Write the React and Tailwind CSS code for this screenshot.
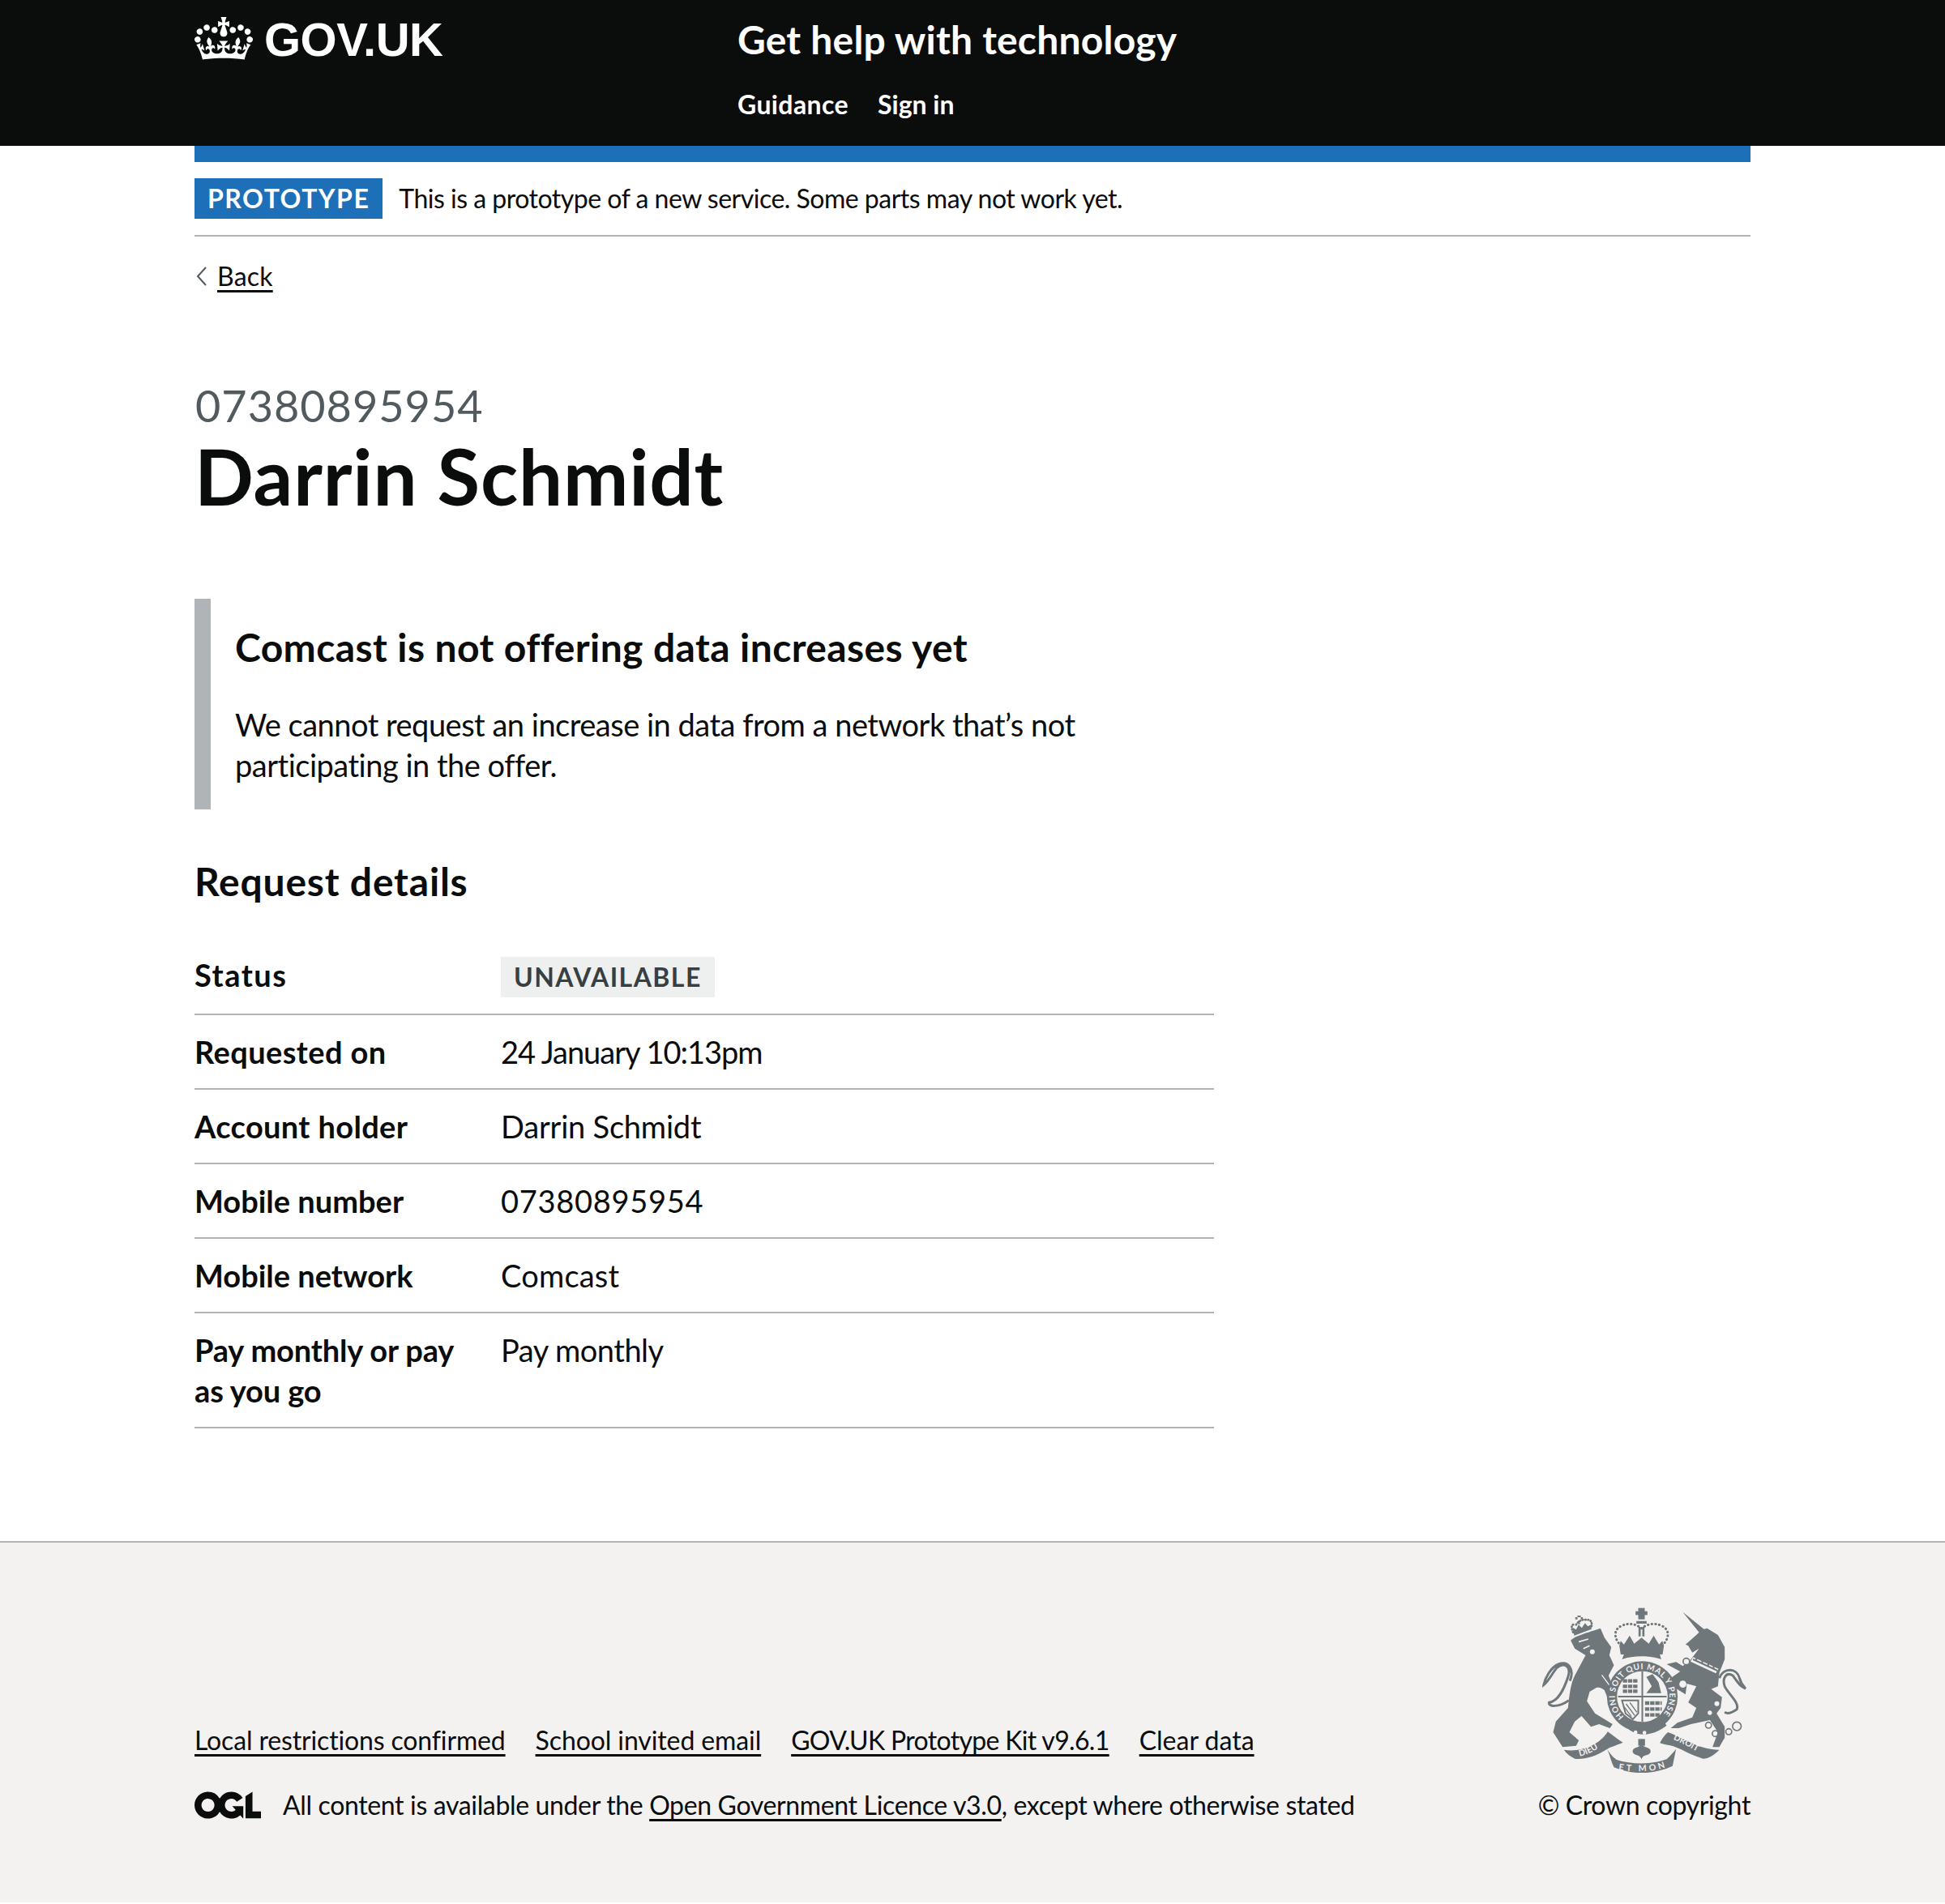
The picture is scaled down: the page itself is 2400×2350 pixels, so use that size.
import React from "react";

const rows = [
  ["Requested on", "tracking-[0.4px]", "24 January 10:13pm", "tracking-[-1px]"],
  ["Account holder", "tracking-[0.35px]", "Darrin Schmidt", "tracking-[-0.2px]"],
  ["Mobile number", "", "07380895954", "tracking-[0.7px]"],
  ["Mobile network", "", "Comcast", "tracking-[0.2px]"],
];

const CrownLogo = () => (
  <svg viewBox="0 0 132 97" className="w-[72px] h-[53px] fill-white">
    <path
      fillRule="evenodd"
      d="M25 30.2c3.5 1.5 7.7-.2 9.1-3.7 1.5-3.6-.2-7.8-3.9-9.2-3.6-1.4-7.6.3-9.1 3.9-1.4 3.5.3 7.5 3.9 9zM9 39.5c3.6 1.5 7.8-.2 9.2-3.7 1.5-3.6-.2-7.8-3.9-9.1-3.6-1.5-7.6.2-9.1 3.8-1.4 3.5.3 7.5 3.8 9zM4.4 57.2c3.5 1.5 7.7-.2 9.1-3.8 1.5-3.6-.2-7.7-3.9-9.1-3.5-1.5-7.6.3-9.1 3.8-1.4 3.5.3 7.6 3.9 9.1zm38.3-21.4c3.5 1.5 7.7-.2 9.1-3.8 1.5-3.6-.2-7.7-3.9-9.1-3.6-1.5-7.6.3-9.1 3.8-1.3 3.6.4 7.7 3.9 9.1zm64.4-5.6c-3.6 1.5-7.8-.2-9.1-3.7-1.5-3.6.2-7.8 3.8-9.2 3.6-1.4 7.7.3 9.2 3.9 1.3 3.5-.4 7.5-3.9 9zm15.9 9.3c-3.6 1.5-7.7-.2-9.1-3.7-1.5-3.6.2-7.8 3.7-9.1 3.6-1.5 7.7.2 9.2 3.8 1.5 3.5-.3 7.5-3.8 9zm4.7 17.7c-3.6 1.5-7.8-.2-9.2-3.8-1.5-3.6.2-7.7 3.9-9.1 3.6-1.5 7.7.3 9.2 3.8 1.3 3.5-.4 7.6-3.9 9.1zM89.3 35.8c-3.6 1.5-7.8-.2-9.2-3.8-1.4-3.6.2-7.7 3.9-9.1 3.6-1.5 7.7.3 9.2 3.8 1.4 3.6-.3 7.7-3.9 9.1zM69.7 17.7l8.9 4.7V9.3l-8.9 2.8c-.2-.3-.5-.6-.9-.9L72.4 0H59.6l3.5 11.2c-.3.3-.6.5-.9.9l-8.8-2.8v13.1l8.8-4.7c.3.3.6.7.9.9l-5 15.4v.1c-.2.8-.4 1.6-.4 2.4 0 4.1 3.1 7.5 7 8.1h.2c.3 0 .7.1 1 .1.4 0 .7 0 1-.1h.2c4-.6 7.1-4.1 7.1-8.1 0-.8-.1-1.7-.4-2.4V34l-5.1-15.4c.4-.2.7-.6 1-.9zM66 92.8c16.9 0 32.8 1.1 47.1 3.2 4-16.9 8.9-26.7 14-33.5l-9.6-3.4c1 4.9 1.1 7.2 0 10.2-1.5-1.4-3-4.3-4.2-8.7L108.6 76c2.8-2 5-3.2 7.5-3.3-4.4 9.4-10 11.9-13.6 11.2-4.3-.8-6.3-4.6-5.6-7.9 1-4.7 5.7-5.9 8-.5 4.3-8.7-3-11.4-7.6-8.8 7.1-7.2 7.9-13.5 2.1-21.1-8 6.1-8.1 12.3-4.5 20.8-4.7-5.4-12.1-2.5-9.5 6.2 3.4-5.2 7.9-2 7.2 3.1-.6 4.3-6.4 7.8-13.5 7.2-10.3-.9-10.9-8-11.2-13.8 2.5-.5 7.1 1.8 11 7.3L80.2 60c-4.1 4.4-8 5.3-12.3 5.4 1.4-4.4 8-11.6 8-11.6H55.5s6.4 7.2 7.9 11.6c-4.2-.1-8-1-12.3-5.4l1.4 16.4c3.9-5.5 8.5-7.7 10.9-7.3-.3 5.8-.9 12.8-11.1 13.8-7.2.6-12.9-2.9-13.5-7.2-.7-5 3.8-8.3 7.1-3.1 2.7-8.7-4.6-11.6-9.4-6.2 3.7-8.5 3.6-14.7-4.6-20.8-5.8 7.6-5 13.9 2.2 21.1-4.7-2.6-11.9.1-7.7 8.8 2.3-5.5 7.1-4.2 8.1.5.7 3.3-1.3 7.1-5.7 7.9-3.5.7-9-1.8-13.5-11.2 2.5.1 4.7 1.3 7.5 3.3l-4.7-15.4c-1.2 4.4-2.7 7.2-4.3 8.7-1.1-3-.9-5.3 0-10.2l-9.5 3.4c5 6.9 9.9 16.7 14 33.5 14.8-2.1 30.8-3.2 47.7-3.2z"
    />
  </svg>
);

const OglLogo = () => (
  <svg viewBox="0 0 483.2 195.7" className="w-[82px] h-[34px] fill-[#0b0c0c] shrink-0">
    <path d="M421.5 142.8V.1l-50.7 32.3v161.1h112.4v-50.7zm-122.3-9.6A47.12 47.12 0 0 1 221 97.8c0-26 21.1-47.1 47.1-47.1 16.7 0 31.4 8.7 39.7 21.8l42.7-27.2A97.63 97.63 0 0 0 268.1 0c-36.5 0-68.3 20.1-85.1 49.7A98 98 0 0 0 97.8 0C43.9 0 0 43.9 0 97.8s43.9 97.8 97.8 97.8c36.5 0 68.3-20.1 85.1-49.7a97.76 97.76 0 0 0 149.6 25.4l19.4 22.2h3v-87.8h-80l24.3 27.5zM97.8 145c-26 0-47.1-21.1-47.1-47.1s21.1-47.1 47.1-47.1 47.2 21 47.2 47S123.8 145 97.8 145" />
  </svg>
);

// royal arms, drawn by hand in the coordinates of the zoomed reference
const RoyalArms = () => (
  <svg viewBox="70 45 755 615" className="w-[252px] h-[205px] fill-[#6f777b]">
    {/* lion */}
    <path d="M175 170C190 155 215 148 285 125L300 160L325 195L318 225C325 240 330 250 335 262L315 300L335 350L345 395L320 405L300 355C290 345 280 342 270 345L245 360L235 395L265 440L330 480L320 495L280 480L250 490L215 450L190 470L170 510L205 540L195 560L145 565L110 510L120 470L165 420C170 370 175 330 190 300L230 225L190 200Z" />
    <path d="M168 392C130 420 90 415 95 400C130 395 150 350 165 305C178 265 150 250 125 270C110 285 95 320 75 335C80 310 100 270 130 258C165 245 190 275 172 320" className="fill-none stroke-[#6f777b] stroke-[9]" />
    <path d="M205 175L240 165M222 200L245 190" className="stroke-[#f3f2f1] stroke-[5]" />
    <path d="M290 298L345 372" className="stroke-[#f3f2f1] stroke-[4]" />
    <circle cx="255" cy="212" r="9" className="fill-[#f3f2f1]" />
    {/* lion crown */}
    <path d="M184 140C175 120 178 108 190 112M252 118C256 100 245 90 235 95M195 112C205 95 225 90 235 95" className="fill-none stroke-[#6f777b] stroke-[8]" strokeDasharray="2 8" strokeLinecap="round" />
    <path d="M182 122L195 130L204 112L216 124L228 106L238 118L250 112L252 128L188 152Z" />
    <path d="M200 92H212V78H200ZM192 84H220V92H192ZM203 96H209V110H203Z" />
    {/* unicorn */}
    <path d="M590 65L668 128L680 125L720 150L745 195L745 240L725 290L720 340L695 350L735 380L730 420L715 440L745 490L745 530L725 565L700 565L720 510L690 465L620 480L575 495L545 495L570 475L625 455L640 420L610 400L625 370L640 340L605 330L600 370L560 345L545 310L580 285L530 258L565 250L590 265L620 240L650 200L625 215L610 190L600 185L640 150L650 140Z" />
    <path d="M725 310C740 270 790 270 800 310C805 330 815 340 822 348C800 340 790 320 775 300C750 285 735 310 745 340C760 370 800 400 790 425C775 435 755 445 745 435" className="fill-none stroke-[#6f777b] stroke-[9]" />
    <path d="M628 232L722 275L712 292L618 248Z" className="fill-[#f3f2f1]" />
    <path d="M628 240L718 282M640 232V246M662 242V258M684 252V268M704 262V278" className="fill-none stroke-[#6f777b] stroke-[6]" />
    <circle cx="603" cy="248" r="12" className="fill-[#f3f2f1] stroke-[#6f777b] stroke-[5]" />
    <circle cx="590" cy="332" r="13" className="fill-[#f3f2f1]" />
    <circle cx="685" cy="484" r="11" className="fill-none stroke-[#6f777b] stroke-[5]" />
    <circle cx="710" cy="515" r="11" className="fill-none stroke-[#6f777b] stroke-[5]" />
    <circle cx="760" cy="508" r="11" className="fill-none stroke-[#6f777b] stroke-[5]" />
    <circle cx="790" cy="488" r="16" className="fill-none stroke-[#6f777b] stroke-[5]" />
    <circle cx="725" cy="356" r="11" className="fill-[#f3f2f1]" />
    <circle cx="716" cy="404" r="9" className="fill-[#f3f2f1]" />
    <circle cx="690" cy="438" r="8" className="fill-[#f3f2f1]" />
    {/* main crown */}
    <path d="M425 50H449V92H425Z" />
    <path d="M415 62H459V76H415Z" />
    <path d="M418 98H456V108H418ZM426 120H434V155H426ZM440 120H448V155H440Z" />
    <path d="M362 190C335 165 330 130 365 115C395 102 420 112 437 125C455 112 480 102 510 115C545 130 540 165 512 190" className="fill-none stroke-[#6f777b] stroke-[9]" strokeDasharray="1 13" strokeLinecap="round" />
    <path d="M355 190L360 172L372 185L393 152L410 182L437 160L464 182L482 152L502 185L514 172L520 190L515 222H360Z" />
    <path d="M372 222C410 212 465 212 505 222L510 240C470 225 405 225 365 240Z" />
    {/* garter and shield */}
    <circle cx="440" cy="378" r="131" />
    <circle cx="440" cy="378" r="94" className="fill-[#f3f2f1]" />
    <path d="M350 378H530M440 284V472" className="fill-none stroke-[#6f777b] stroke-[6]" />
    <path d="M368 320H425M368 340H425M368 358H425M450 402H512M450 424H512M450 446H505" className="fill-none stroke-[#6f777b] stroke-[13]" strokeDasharray="16 3" />
    <path d="M455 305L478 295L500 325L510 365H455L475 340Z" />
    <path d="M365 392H425V440L405 462L378 440Z" className="fill-[#f3f2f1] stroke-[#6f777b] stroke-[6]" />
    <path d="M380 405L412 448M394 400L420 436M372 415L400 452" className="fill-none stroke-[#6f777b] stroke-[4]" />
    <path d="M370 480C410 530 470 530 530 485L520 470C480 505 420 510 385 465Z" />
    <circle cx="415" cy="510" r="7" className="fill-[#f3f2f1]" />
    <circle cx="448" cy="512" r="7" className="fill-[#f3f2f1]" />
    <defs>
      <path id="garterRing" d="M372 452A101 101 0 1 1 508 452" />
      <path id="ribbonLeft" d="M200 600C240 595 280 570 315 540" />
      <path id="ribbonRight" d="M550 535C590 550 630 575 675 600" />
      <path id="ribbonMid" d="M350 648C400 658 480 658 525 640" />
    </defs>
    <text className="fill-[#f3f2f1] text-[30px] font-bold">
      <textPath href="#garterRing" textLength="470">HONI SOIT QUI MAL Y PENSE</textPath>
    </text>
    {/* ribbon */}
    <path d="M150 575C210 585 280 560 312 508C335 525 355 540 368 548C340 560 320 565 310 572C270 600 220 612 190 608C175 600 160 590 150 575Z" />
    <path d="M310 572C320 590 335 605 345 612C400 630 480 630 530 610C545 595 555 585 565 572L552 635C480 668 400 668 335 640C325 620 320 595 310 572Z" />
    <path d="M505 550C515 530 525 518 535 510C590 530 650 575 725 575C705 595 685 608 665 608C620 595 590 575 555 562C540 558 520 555 505 550Z" />
    <text className="fill-[#f3f2f1] text-[32px] font-bold">
      <textPath href="#ribbonLeft" startOffset="8">DIEU</textPath>
    </text>
    <text className="fill-[#f3f2f1] text-[32px] font-bold">
      <textPath href="#ribbonRight" startOffset="4">DROIT</textPath>
    </text>
    <text className="fill-[#f3f2f1] text-[32px] font-bold">
      <textPath href="#ribbonMid" textLength="175" startOffset="2">ET MON</textPath>
    </text>
    <path d="M425 535H450V560H425Z" />
    <path d="M437 555C425 570 400 565 405 585C415 600 430 590 437 610C445 590 460 600 470 585C475 565 450 570 437 555Z" />
  </svg>
);

export default function App() {
  return (
    <div className="w-[2400px] font-['Lato',sans-serif] text-[#0b0c0c] text-[38px] leading-[50px] bg-white [font-variant-ligatures:none]">
      <header className="bg-[#0b0c0c] h-[180px] text-white">
        <div className="w-[1920px] mx-auto flex">
          <div className="w-[670px] flex items-start gap-[14px] pt-[21px]">
            <CrownLogo />
            <span className="font-['Liberation_Sans',sans-serif] font-bold text-[58px] leading-[56px] tracking-[-0.5px]">GOV.UK</span>
          </div>
          <div className="pt-[19px]">
            <div className="text-[48px] leading-[60px] font-bold tracking-[0.2px]">Get help with technology</div>
            <nav className="flex gap-[36px] mt-[25px] text-[32px] leading-[50px] font-bold">
              <span className="tracking-[0.4px]">Guidance</span>
              <span>Sign in</span>
            </nav>
          </div>
        </div>
      </header>

      <main className="w-[1920px] mx-auto">
        <div className="h-[20px] bg-[#1d70b8]" />
        <div className="flex items-center gap-[20px] py-[20px] border-b-2 border-[#b1b4b6] text-[32px] h-[92px]">
          <span className="bg-[#1d70b8] text-white font-bold tracking-[1.5px] h-[50px] leading-[50px] px-[16px]">PROTOTYPE</span>
          <span className="tracking-[-0.5px]">This is a prototype of a new service. Some parts may not work yet.</span>
        </div>
        <div className="flex items-center gap-[12px] mt-[24px] text-[32px] leading-[50px]">
          <svg viewBox="0 0 14 24" className="w-[14px] h-[24px] ml-[2px]">
            <path d="M12 1L2 12L12 23" className="fill-none stroke-[#505a5f] stroke-2" />
          </svg>
          <a className="underline underline-offset-[5px] tracking-[0.2px]">Back</a>
        </div>

        <div className="text-[54px] leading-[60px] text-[#505a5f] mt-[105px] ml-[1px] tracking-[1px]">07380895954</div>
        <h1 className="text-[96px] leading-[100px] font-bold mt-[6px] tracking-[0.8px]">Darrin Schmidt</h1>

        <div className="w-[1258px] mt-[102px] border-l-[20px] border-[#b1b4b6] pl-[30px] pt-[30px] h-[260px]">
          <h2 className="text-[48px] leading-[60px] font-bold tracking-[0.4px]">Comcast is not offering data increases yet</h2>
          <p className="mt-[40px] w-[1060px] tracking-[-0.5px]">We cannot request an increase in data from a network that’s not participating in the offer.</p>
        </div>

        <h2 className="text-[48px] leading-[60px] font-bold mt-[59px] tracking-[0.8px]">Request details</h2>

        <dl className="w-[1258px] mt-[42px]">
          <div className="flex border-b-2 border-[#b1b4b6] h-[93px] items-start">
            <dt className="w-[378px] font-bold pt-[18px] tracking-[1.5px]">Status</dt>
            <dd className="pt-[21px]">
              <span className="block bg-[#eeefef] text-[#383f43] font-bold text-[32px] tracking-[1.45px] h-[50px] leading-[50px] px-[16px]">UNAVAILABLE</span>
            </dd>
          </div>
          {rows.map((row) => (
            <div key={row[0]} className="flex border-b-2 border-[#b1b4b6] py-[20px]">
              <dt className={`w-[378px] font-bold ${row[1]}`}>{row[0]}</dt>
              <dd className={row[3]}>{row[2]}</dd>
            </div>
          ))}
          <div className="flex border-b-2 border-[#b1b4b6] py-[20px]">
            <dt className="w-[378px] font-bold pr-[20px] tracking-[-0.15px]">Pay monthly or pay as you go</dt>
            <dd className="tracking-[-0.5px]">Pay monthly</dd>
          </div>
        </dl>
      </main>

      <footer className="mt-[139px] h-[446px] bg-[#f3f2f1] border-t-2 border-[#b1b4b6] text-[32px]">
        <div className="w-[1920px] mx-auto flex justify-between items-start pt-[79px]">
          <div className="pt-[140px]">
            <div className="flex gap-[37px] leading-[50px]">
              <a className="underline underline-offset-[5px] tracking-[-0.15px]">Local restrictions confirmed</a>
              <a className="underline underline-offset-[5px] tracking-[-0.1px]">School invited email</a>
              <a className="underline underline-offset-[5px] tracking-[-0.67px]">GOV.UK Prototype Kit v9.6.1</a>
              <a className="underline underline-offset-[5px]">Clear data</a>
            </div>
            <div className="flex items-center gap-[27px] mt-[30px] leading-[50px]">
              <OglLogo />
              <span className="tracking-[-0.35px]">
                All content is available under the{" "}
                <a className="underline underline-offset-[5px]">Open Government Licence v3.0</a>, except where otherwise stated
              </span>
            </div>
          </div>
          <div className="flex flex-col items-center">
            <RoyalArms />
            <span className="leading-[50px] mt-[15px] tracking-[-0.36px]">© Crown copyright</span>
          </div>
        </div>
      </footer>
    </div>
  );
}
